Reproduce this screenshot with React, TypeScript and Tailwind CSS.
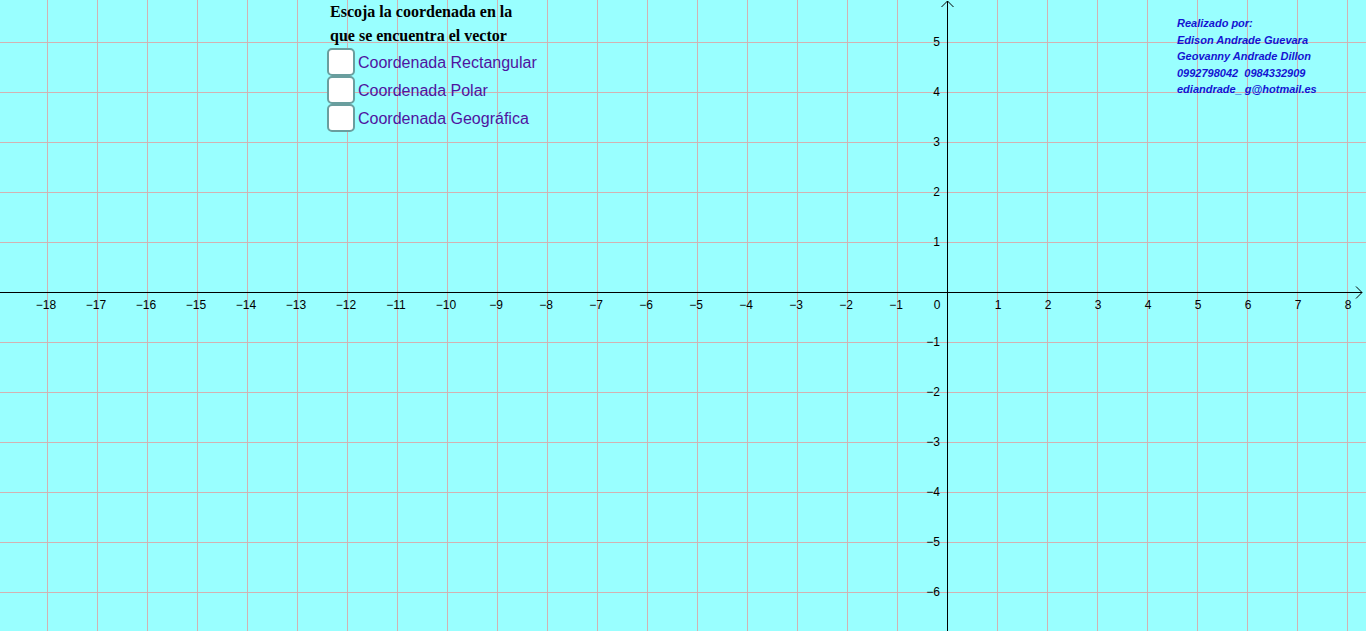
import React from "react";

const OX = 947;
const OY = 292;
const U = 50;

const xs = Array.from({ length: 28 }, (_, i) => i - 19);
const ys = Array.from({ length: 14 }, (_, i) => i - 7);

function label(n: number) {
  return n < 0 ? "\u2212" + Math.abs(n) : String(n);
}

function Graph() {
  return (
    <svg width={1366} height={631} className="absolute inset-0" style={{ fontFamily: "'Liberation Sans', Arial, sans-serif" }} shapeRendering="crispEdges">
      {xs.map((n) => {
        const x = OX + n * U + 0.5;
        if (n === 0 || x < 0 || x > 1366) return null;
        return <line key={"v" + n} x1={x} y1={0} x2={x} y2={631} stroke="#d2b2b2" strokeWidth={1} />;
      })}
      {ys.map((n) => {
        const y = OY - n * U + 0.5;
        if (n === 0 || y < 0 || y > 631) return null;
        return <line key={"h" + n} x1={0} y1={y} x2={1366} y2={y} stroke="#d2b2b2" strokeWidth={1} />;
      })}
      {/* axes */}
      <line x1={0} y1={OY + 0.5} x2={1362} y2={OY + 0.5} stroke="#000" strokeWidth={1} />
      <line x1={OX + 0.5} y1={1} x2={OX + 0.5} y2={631} stroke="#000" strokeWidth={1} />
      <polyline points={`1356,${OY - 5.5} 1362,${OY + 0.5} 1356,${OY + 6.5}`} fill="none" stroke="#000" strokeWidth={1} shapeRendering="auto" />
      <polyline points={`${OX - 5.5},7 ${OX + 0.5},1 ${OX + 6.5},7`} fill="none" stroke="#000" strokeWidth={1} shapeRendering="auto" />
      {/* x labels */}
      {xs.map((n) => {
        const x = OX + n * U;
        if (n < -18 || n > 8) return null;
        if (n === 0) return <text key={"xl0"} x={937} y={309} fontSize={12} textAnchor="middle" fill="#000">0</text>;
        return (
          <text key={"xl" + n} x={n < 0 ? x - 1 : x + 1} y={309} fontSize={12} textAnchor="middle" fill="#000">
            {label(n)}
          </text>
        );
      })}
      {/* y labels */}
      {ys.map((n) => {
        const y = OY - n * U;
        if (n === 0 || n < -6 || n > 5) return null;
        return (
          <text key={"yl" + n} x={940} y={y + 4} fontSize={12} textAnchor="end" fill="#000">
            {label(n)}
          </text>
        );
      })}
    </svg>
  );
}

const options = ["Coordenada Rectangular", "Coordenada Polar", "Coordenada Geográfica"];

export default function App() {
  return (
    <div className="relative w-[1366px] h-[631px] bg-[#99ffff] overflow-hidden">
      <Graph />

      <div className="absolute left-[327px] top-0 flex flex-col">
        <div className="pl-[3px] text-[16px] leading-[24px] font-bold text-black" style={{ fontFamily: "'Liberation Serif', 'Times New Roman', serif" }}>
          <div>Escoja la coordenada en la</div>
          <div>que se encuentra el vector</div>
        </div>
        <div className="flex flex-col">
          {options.map((o) => (
            <div key={o} className="flex items-center h-[28px]">
              <div className="w-[28px] h-[28px] rounded-[5px] border-2 border-[#6a9e9e] bg-white" />
              <span className="ml-[3px] pt-[2px] text-[16px] text-[#4f14a0]" style={{ fontFamily: "'Liberation Sans', Arial, sans-serif" }}>
                {o}
              </span>
            </div>
          ))}
        </div>
      </div>

      <div
        className="absolute left-[1177px] top-[15px] flex flex-col text-[11px] leading-[16.5px] font-bold italic text-[#1414d2]"
        style={{ fontFamily: "'Liberation Sans', Arial, sans-serif" }}
      >
        <div>Realizado por:</div>
        <div>Edison Andrade Guevara</div>
        <div>Geovanny Andrade Dillon</div>
        <div className="whitespace-pre">0992798042  0984332909</div>
        <div>ediandrade_ g@hotmail.es</div>
      </div>
    </div>
  );
}
